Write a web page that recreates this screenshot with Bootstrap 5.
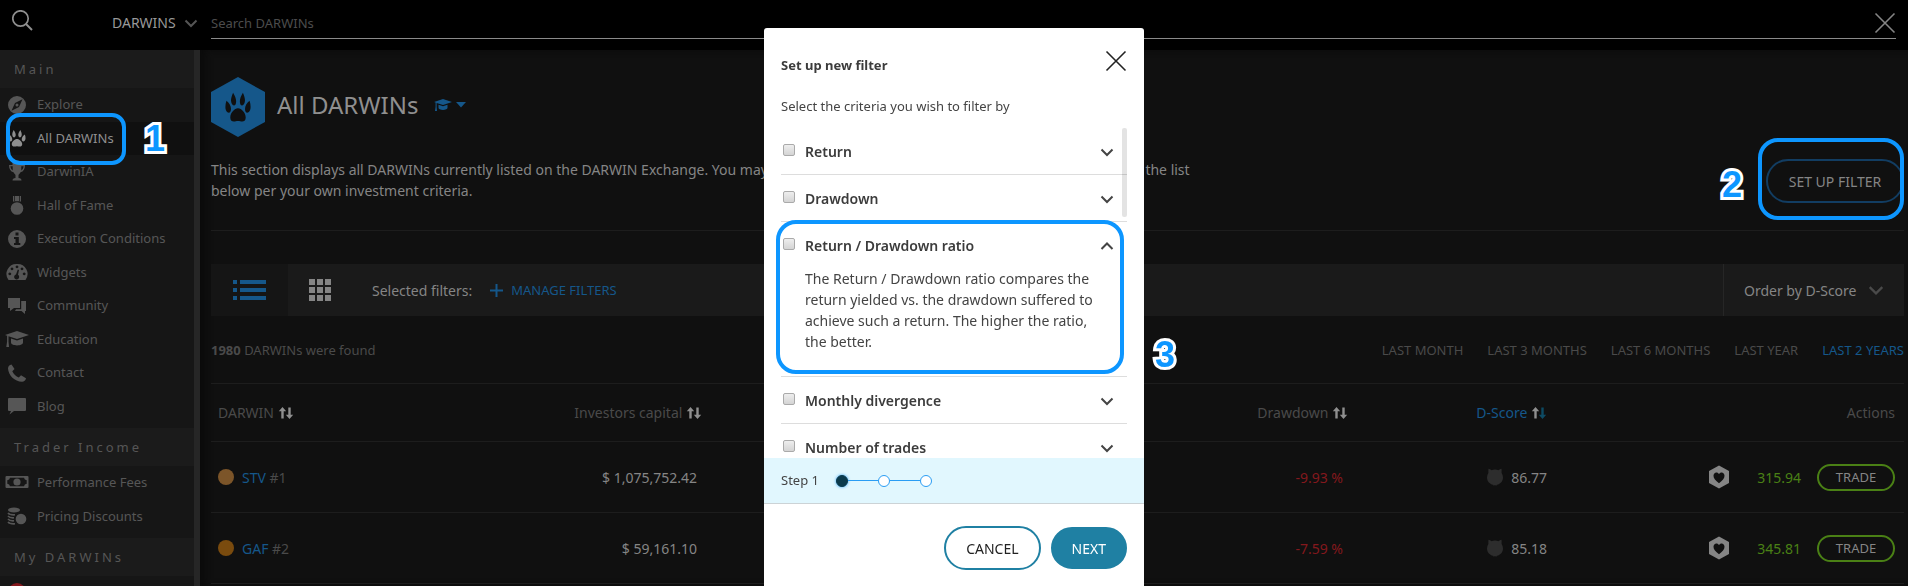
<!DOCTYPE html>
<html lang="en">
<head>
<meta charset="utf-8">
<meta name="viewport" content="width=device-width, initial-scale=1">
<title>All DARWINs</title>
<link href="https://cdn.jsdelivr.net/npm/bootstrap@5.3.0/dist/css/bootstrap.min.css" rel="stylesheet">
<style>
:root { --accent: #15578a; --marker: #0d96ff; --rule: #1d1d1d; --soft: #4a4a4a; --bright: #858585; }
body { font: 14px/21px "Noto Sans", "Open Sans", sans-serif; background: #101010; color: var(--bright); height: 100vh; overflow: hidden; }
a { text-decoration: none; }
svg { display: block; fill: currentColor; flex: none; }
.fs-13 { font-size: 13px; }

/* top search bar */
.topbar { background: #000; height: 50px; padding: 0 12px; flex: none; }
.topbar-scope { width: 199px; padding-right: 13px; }
.topbar-scope select { appearance: none; background: none; border: 0; color: #999; padding: 0; width: 64px; }
.topbar-field { border-bottom: 1px solid #8a8a8a; height: 39px; }
.topbar-field input { background: none; border: 0; outline: 0; padding: 8px 0 0; }
.topbar-field input::placeholder { color: #4c4c4c; opacity: 1; }
.plain-btn { background: none; border: 0; padding: 0; color: inherit; }

/* side navigation */
.sidebar { width: 200px; background: #161616; border-right: 6px solid #262626; overflow: hidden; flex: none; font-size: 13px; color: #565656; }
.sidebar h2 { font-size: 13px; line-height: 20px; font-weight: 400; letter-spacing: 3px; background: #1b1b1b; padding: 9px 14px; margin: 0; }
.sidebar ul { padding-bottom: 5px; }
.sidebar li { position: relative; }
.sidebar li a { display: flex; align-items: center; gap: 8px; padding: 7px 5px; line-height: 1.5; color: inherit; }
.sidebar li a svg { margin: -4px 0; }
.sidebar li.current a { background: #101010; color: #8f8f8f; }

/* numbered markers */
.marker-box { position: absolute; border: 4px solid var(--marker); border-radius: 20px; pointer-events: none; z-index: 2; }
.marker-num { position: absolute; font: 700 36px/36px "Liberation Sans", Arial, sans-serif; color: var(--marker); -webkit-text-stroke: 6px #fff; paint-order: stroke fill; z-index: 2; }
.mark-nav { left: 6px; top: -9px; width: 120px; height: 52px; border-radius: 14px; }
.num-nav { left: 145px; top: -1px; }
.mark-btn { inset: -21px 0 -17px -8px; }
.num-btn { left: -44px; top: 8px; }
.mark-item { left: 12px; right: 20px; top: -2px; bottom: 3px; }
.num-item { left: 100%; top: 309px; margin-left: 11px; }

/* main content */
main { padding: 27px 4px 0 11px; box-shadow: inset 6px 0 6px #0b0b0b; }
h1 { font-size: 24px; line-height: 34px; color: #8f8f8f; font-weight: 400; }
.intro { width: 984px; margin: 22px 0 0; }
.filter-btn { border: 2px solid #123d62; border-radius: 22px; background: none; color: var(--bright); height: 44px; width: 138px; padding: 0; }
.filter-cell { margin-top: 22px; }
.page-head { border-bottom: 1px solid var(--rule); padding-bottom: 27px; }
.toolbar { background: #1a1a1a; height: 52px; margin-top: 33px; }
.toolbar .view-list { background: #151515; width: 77px; color: var(--accent); }
.toolbar .view-grid { width: 64px; }
.toolbar-filters { margin-left: 20px; gap: 18px; }
.order-by { border-left: 1px solid #262626; padding: 0 20px; width: 181px; }
.accent, .darwins th.accent { color: var(--accent); }
.soft { color: var(--soft); }
.found { padding: 24px 0 22px; }

.darwins { width: 100%; table-layout: fixed; border-top: 1px solid var(--rule); }
.darwins th { font-weight: 400; color: var(--soft); height: 58px; }
.darwins td { height: 71px; }
.darwins th, .darwins td { padding: 0 9px 0 7px; border-bottom: 1px solid var(--rule); vertical-align: middle; white-space: nowrap; }
.darwins .num { text-align: right; }
.darwins td.num { padding-right: 14px; }
.darwins td.flush { padding-right: 9px; }
.darwins th svg { display: inline-block; color: #8f8f8f; vertical-align: -2px; }
.coin { width: 16px; height: 16px; border-radius: 50%; background: #7c5529; }
.coin-gold { background: #7a4b0e; }
.loss { color: #84181d; }
.gain { color: #4a8015; }
.trade { border: 2px solid #4a8015; border-radius: 14px; height: 27px; width: 78px; line-height: 21px; font-size: 13px; color: var(--bright); background: none; padding: 0; }

/* filter dialog */
.modal { overflow: hidden; color: #444; }
.modal-dialog { max-width: 380px; margin: 28px auto 0; }
.modal-content { border: 0; border-radius: 3px; }
.modal-head { padding: 22px 17px 0; }
.modal-head h2 { font-size: 13px; line-height: 21px; margin: 5px 0 0; font-weight: 700; color: #3c3c3c; }
.criteria { height: 330px; overflow: hidden; position: relative; }
.criteria-thumb { position: absolute; right: 17px; top: 0; width: 5px; height: 89px; border-radius: 2px; background: rgba(0,0,0,.11); }
.criterion { position: relative; padding: 13px 0 12px; margin: 0 17px; border-bottom: 1px solid #ddd; }
.criterion-wrap { position: relative; }
.criterion .title-line { font-weight: 600; color: #3c3c3c; line-height: 21px; }
.criterion input { appearance: none; width: 12px; height: 12px; margin: 0 10px 3px 2px; border: 1px solid #aaa; border-radius: 2px; background: linear-gradient(#eee, #d4d4d4); }
.criterion svg { margin-right: 13px; }
.criterion p { margin: 12px 0 12px 24px; width: 304px; }
.steps { background: #e1f7fe; border-bottom: 1px solid #ccd3d6; height: 46px; padding: 0 17px; }
.step-label { margin-right: 17px; }
.step-dot { width: 12px; height: 12px; border: 1px solid #2a9df4; border-radius: 50%; background: #fff; }
.step-dot.done { background: #0b3a4c; border-color: #0b3a4c; box-shadow: 0 0 3px #2a9df4; }
.step-link { width: 30px; height: 1px; background: #2a9df4; }
.modal-actions { padding: 22px 17px 26px; gap: 10px; }
.pill { border: 2px solid #1f80a3; border-radius: 22px; height: 44px; padding: 0 20px; background: #fff; color: #222; }
.pill-solid { background: #1f80a3; color: #fff; height: 42px; padding: 0 19px; }
</style>
</head>
<body class="d-flex flex-column">
<svg width="0" height="0" class="position-absolute" aria-hidden="true">
  <symbol id="paw" viewBox="0 0 24 24"><path d="M12 12.600c3 0 6.600 3.400 6.600 6.700 0 2.200-1.500 2.900-3 2.900-1.300 0-2.300-.4-3.600-.4s-2.300.4-3.600.4c-1.500 0-3-.7-3-2.900 0-3.300 3.600-6.700 6.600-6.700zM7.800 1.200c1.500 2 2.600 4.300 2.600 6.200 0 1.900-.7 3.200-1.900 3.200S6 9 6 6.800c0-1.700.8-3.700 1.800-5.600zM16.200 1.200c-1.500 2-2.600 4.300-2.600 6.200 0 1.900.7 3.200 1.900 3.200S18 9 18 6.800c0-1.700-.8-3.700-1.800-5.600zM2.100 7.100c2.400 1.500 3.900 3.700 3.900 6 0 1.700-.8 2.700-1.900 2.700C2.500 15.800 1.200 14 1.200 11.700c0-1.500.3-3.200.9-4.600zM21.900 7.100c-2.400 1.500-3.900 3.700-3.900 6 0 1.700.8 2.700 1.900 2.700 1.600 0 2.900-1.800 2.900-4.100 0-1.500-.3-3.200-.9-4.600z"/></symbol>
  <symbol id="cap" viewBox="0 0 24 18"><path d="M12 1 24 5 12 9 3.500 6.200v5.300L4 17H1.300l.8-5.500V5.700L0 5zM6 8.600 12 10.600l6-2v4c0 1.700-2.700 2.900-6 2.900s-6-1.200-6-2.900z"/></symbol>
  <symbol id="sort" viewBox="0 0 16 14"><path d="M4.500 1 8.200 5.200H5.700V12.500H3.300V5.200H.8zM11.500 13 15.200 8.800H12.700V1.500H10.300V8.800H7.800z"/></symbol>
  <symbol id="sort-desc" viewBox="0 0 16 14"><path d="M4.500 1 8.200 5.200H5.700V12.500H3.300V5.200H.8z"/><path fill="#0d4a63" d="M11.500 13 15.200 8.800H12.700V1.500H10.300V8.800H7.800z"/></symbol>
  <symbol id="down" viewBox="0 0 14 14"><path fill="none" stroke="currentColor" stroke-width="2" d="M1.500 4.500 7 10 12.500 4.500"/></symbol>
  <symbol id="up" viewBox="0 0 14 14"><path fill="none" stroke="currentColor" stroke-width="2" d="M1.500 10 7 4.500 12.500 10"/></symbol>
  <symbol id="cross" viewBox="0 0 22 22"><path fill="none" stroke="currentColor" stroke-width="1.600" d="M1.500 1.500 20.500 20.500M20.500 1.500 1.500 20.500"/></symbol>
  <symbol id="owl" viewBox="0 0 16 18"><path d="M1.500.8C3 1.200 3.800 1.700 4.500 2.200a9 9 0 0 1 7 0C12.200 1.700 13 1.200 14.500.8 14.800 2.500 14.500 4 14.600 5A9 9 0 0 1 16 9.500C16 13 13.500 16 10 16.800L9.200 17.800 8 17l-1.200.8L6 16.800C2.500 16 0 13 0 9.500A9 9 0 0 1 1.400 5C1.500 4 1.200 2.500 1.500.8z"/></symbol>
  <symbol id="fav" viewBox="0 0 20 24"><path fill-rule="evenodd" d="M10 .5 20 6v12L10 23.500 0 18V6zM10 18.200c3.500-2.500 5.500-4.800 5.500-7.400C15.500 8.700 14.200 7.400 12.600 7.400c-1.100 0-2 .6-2.600 1.600C9.400 8 8.500 7.400 7.400 7.400 5.800 7.400 4.500 8.700 4.500 10.800c0 2.600 2 4.900 5.500 7.400z"/></symbol>
</svg>

<header class="topbar d-flex align-items-start">
  <div class="topbar-scope d-flex align-items-center justify-content-between">
    <svg width="22" height="22" viewBox="0 0 22 22" class="mt-2" style="color:#8f8f8f"><circle cx="8.500" cy="8.500" r="7.700" fill="none" stroke="currentColor" stroke-width="1.700"/><path d="M14 14 20 20" stroke="currentColor" stroke-width="2"/></svg>
    <div class="d-flex align-items-center mt-2 pt-1 gap-2">
      <select aria-label="Search scope"><option>DARWINS</option></select>
      <svg width="14" height="14" style="color:#555"><use href="#down"/></svg>
    </div>
  </div>
  <div class="topbar-field flex-grow-1 d-flex align-items-center">
    <input class="fs-13 flex-grow-1" type="search" aria-label="Search" placeholder="Search DARWINs">
    <button class="plain-btn" aria-label="Close search"><svg class="mt-2" width="22" height="22"><use href="#cross"/></svg></button>
  </div>
</header>

<div class="d-flex flex-grow-1 overflow-hidden">
  <nav class="sidebar">
    <h2>Main</h2>
    <ul class="list-unstyled mb-0">
      <li><a href="#"><svg width="24" height="18" viewBox="0 0 24 18"><path fill-rule="evenodd" d="M12 0a9 9 0 1 1 0 18 9 9 0 0 1 0-18zM17.500 3.200 10 7 6.500 14.800 14 11zM12 7.500a1.500 1.500 0 1 1 0 3 1.500 1.500 0 0 1 0-3z"/></svg>Explore</a></li>
      <li class="current"><a href="#"><svg width="24" height="19"><use href="#paw"/></svg>All DARWINs</a><span class="marker-box mark-nav"></span><span class="marker-num num-nav">1</span></li>
      <li><a href="#"><svg width="24" height="18" viewBox="0 0 24 18"><path d="M7.500 0h9v2H20c0 4-1.500 6.500-4.500 7.300-.8 1.500-1.700 2-2 2.700v3c2 .3 3 1 3 2.500h-9c0-1.500 1-2.200 3-2.500v-3c-.3-.7-1.200-1.200-2-2.700C5.500 8.500 4 6 4 2h3.500zM5.400 3.300c.3 2 1 3.400 2.300 4.200V3.300zm10.900 0v4.200c1.300-.8 2-2.200 2.300-4.200z"/></svg>DarwinIA</a></li>
      <li><a href="#"><svg width="24" height="19" viewBox="0 0 24 19"><circle cx="12" cy="12.500" r="6.300"/><path d="M8 0h1.300v6L8 5.300zM10 0h4v5.200h-4zM14.700 0H16v5.300L14.700 6z"/></svg>Hall of Fame</a></li>
      <li><a href="#"><svg width="24" height="18" viewBox="0 0 24 18"><path fill-rule="evenodd" d="M12 0a9 9 0 1 1 0 18 9 9 0 0 1 0-18zM10.500 2.500v3h3v-3zM9 7v2h1.500v4H9v2h6.300v-2h-1.500V7z"/></svg>Execution Conditions</a></li>
      <li><a href="#"><svg width="24" height="18" viewBox="0 0 24 18"><path fill-rule="evenodd" d="M12 1a10 10 0 0 1 8.500 16h-17A10 10 0 0 1 12 1zM12 2.500a1.400 1.400 0 1 0 .01 0zM7 4.500a1.400 1.400 0 1 0 .01 0zM17 4.500a1.400 1.400 0 1 0 .01 0zM4.800 9.500a1.400 1.400 0 1 0 .01 0zM19.200 9.500a1.400 1.400 0 1 0 .01 0zM12.800 6.500 11 11.500a2.500 2.500 0 1 0 2 .3L14 7z"/></svg>Widgets</a></li>
      <li><a href="#"><svg width="24" height="18" viewBox="0 0 24 18"><path d="M3 1h12v10H9l-4 3v-3H3zM16.200 4H21v10h-1v3l-3.500-3H10l1-1.800h5.200z"/></svg>Community</a></li>
      <li><a href="#"><svg width="24" height="18"><use href="#cap"/></svg>Education</a></li>
      <li><a href="#"><svg width="24" height="18" viewBox="0 0 24 18"><path d="M6.500.5 9.500 5 7.300 7.200C8.500 10 11 12.400 13.800 13.500L16 11.200l5 3c-.3 2-2 3.500-4 3.600C9.500 17.500 3.500 11.500 3 4.500 3 2.500 4.500.8 6.500.5z"/></svg>Contact</a></li>
      <li><a href="#"><svg width="24" height="18" viewBox="0 0 24 18"><path d="M4 1h16a1 1 0 0 1 1 1v11a1 1 0 0 1-1 1H9l-4.500 3.500L6 14H4a1 1 0 0 1-1-1V2a1 1 0 0 1 1-1z"/></svg>Blog</a></li>
    </ul>
    <h2>Trader Income</h2>
    <ul class="list-unstyled mb-0">
      <li><a href="#"><svg width="24" height="18" viewBox="0 0 24 18"><path fill-rule="evenodd" d="M1.500 2h21a1 1 0 0 1 1 1v10a1 1 0 0 1-1 1h-21a1 1 0 0 1-1-1V3a1 1 0 0 1 1-1zM5 3.800A3 3 0 0 1 2.300 6.300v3.400A3 3 0 0 1 5 12.200h14a3 3 0 0 1 2.700-2.500V6.300A3 3 0 0 1 19 3.800zM12 4.400a3.600 3.600 0 1 1 0 7.200 3.600 3.600 0 0 1 0-7.200z"/></svg>Performance Fees</a></li>
      <li><a href="#"><svg width="24" height="18" viewBox="0 0 24 18"><ellipse cx="9" cy="3" rx="6" ry="2.500"/><circle cx="16" cy="12" r="5.300"/><path fill="none" stroke="currentColor" stroke-width="1.600" d="M3 6c1 1.300 3 2 7 1.800M3 9c1 1.300 3 2 6 1.800M3 12c1 1.300 3 2 6 1.800M3 15c1 1.300 3 2 7 1.800"/></svg>Pricing Discounts</a></li>
    </ul>
    <h2>My DARWINs</h2>
    <ul class="list-unstyled mb-0">
      <li><a href="#" aria-label="My DARWINs"><svg width="24" height="18" viewBox="0 0 24 18" class="loss m-0"><circle cx="12" cy="9" r="9"/></svg></a></li>
    </ul>
  </nav>

  <main class="flex-grow-1">
    <div class="page-head">
      <div class="d-flex align-items-center">
        <svg width="54" height="60" viewBox="0 0 54 60" class="accent"><path d="M27 0 54 15V45L27 60 0 45V15z"/><svg x="13" y="14" width="28" height="33" viewBox="0 0 24 24" preserveAspectRatio="none" color="#101010"><use href="#paw"/></svg></svg>
        <h1 class="mb-1" style="margin-left:12px">All DARWINs</h1>
        <a class="accent d-flex align-items-center gap-1 ms-3 mb-1" href="#" aria-label="Learn more"><svg width="18" height="14"><use href="#cap"/></svg><svg width="10" height="6" viewBox="0 0 10 6"><path d="M0 0h10L5 5.500z"/></svg></a>
      </div>
      <div class="d-flex justify-content-between align-items-start">
        <p class="intro">This section displays all DARWINs currently listed on the DARWIN Exchange. You may sort them by any of the columns or set up one filter over the list below per your own investment criteria.</p>
        <div class="position-relative filter-cell">
          <button class="filter-btn d-block">SET UP FILTER</button>
          <span class="marker-box mark-btn"></span><span class="marker-num num-btn">2</span>
        </div>
      </div>
    </div>

    <div class="toolbar d-flex align-items-stretch">
      <button class="plain-btn view-list d-flex align-items-center justify-content-center" aria-label="List view"><svg width="33" height="20" viewBox="0 0 33 20"><path d="M0 0h4v4H0zM7 0h26v4H7zM0 8h4v4H0zM7 8h26v4H7zM0 16h4v4H0zM7 16h26v4H7z"/></svg></button>
      <button class="plain-btn view-grid d-flex align-items-center justify-content-center" aria-label="Grid view"><svg width="22" height="22" viewBox="0 0 22 22"><path d="M0 0h6v6H0zM8 0h6v6H8zM16 0h6v6h-6zM0 8h6v6H0zM8 8h6v6H8zM16 8h6v6h-6zM0 16h6v6H0zM8 16h6v6H8zM16 16h6v6h-6z"/></svg></button>
      <div class="toolbar-filters d-flex align-items-center me-auto">
        <span>Selected filters:</span>
        <a href="#" class="accent d-flex align-items-center gap-2 fs-13"><svg width="13" height="13" viewBox="0 0 13 13"><path d="M5.500 0h2v5.500H13v2H7.500V13h-2V7.500H0v-2h5.500z"/></svg>MANAGE FILTERS</a>
      </div>
      <button class="plain-btn order-by d-flex align-items-center justify-content-between">Order by D-Score <svg width="16" height="16" class="soft"><use href="#down"/></svg></button>
    </div>

    <div class="found soft fs-13 d-flex justify-content-between">
      <span><strong>1980</strong> DARWINs were found</span>
      <nav class="d-flex gap-4" aria-label="Period">
        <a class="soft" href="#">LAST MONTH</a><a class="soft" href="#">LAST 3 MONTHS</a><a class="soft" href="#">LAST 6 MONTHS</a><a class="soft" href="#">LAST YEAR</a><a class="accent" href="#">LAST 2 YEARS</a>
      </nav>
    </div>

    <table class="darwins">
      <colgroup><col style="width:200px"><col style="width:300px"><col><col style="width:157px"><col style="width:199px"><col style="width:348px"></colgroup>
      <thead>
        <tr><th>DARWIN <svg width="16" height="14"><use href="#sort"/></svg></th><th class="num">Investors capital <svg width="16" height="14"><use href="#sort"/></svg></th><th></th><th class="num">Drawdown <svg width="16" height="14"><use href="#sort"/></svg></th><th class="num accent">D-Score <svg width="16" height="14"><use href="#sort-desc"/></svg></th><th class="num">Actions</th></tr>
      </thead>
      <tbody>
        <tr>
          <td><div class="d-flex align-items-center gap-2"><span class="coin"></span><span><a class="accent" href="#">STV</a> <span class="soft">#1</span></span></div></td>
          <td class="num">$ 1,075,752.42</td><td></td><td class="num loss">-9.93 %</td>
          <td class="flush"><div class="d-flex align-items-center justify-content-end gap-2"><svg width="16" height="18" style="color:#2d2d2d"><use href="#owl"/></svg>86.77</div></td>
          <td class="flush"><div class="d-flex align-items-center justify-content-end"><svg width="20" height="24"><use href="#fav"/></svg><span class="gain ms-4 ps-1 me-3">315.94</span><button class="trade">TRADE</button></div></td>
        </tr>
        <tr>
          <td><div class="d-flex align-items-center gap-2"><span class="coin coin-gold"></span><span><a class="accent" href="#">GAF</a> <span class="soft">#2</span></span></div></td>
          <td class="num">$ 59,161.10</td><td></td><td class="num loss">-7.59 %</td>
          <td class="flush"><div class="d-flex align-items-center justify-content-end gap-2"><svg width="16" height="18" style="color:#2d2d2d"><use href="#owl"/></svg>85.18</div></td>
          <td class="flush"><div class="d-flex align-items-center justify-content-end"><svg width="20" height="24"><use href="#fav"/></svg><span class="gain ms-4 ps-1 me-3">345.81</span><button class="trade">TRADE</button></div></td>
        </tr>
      </tbody>
    </table>
  </main>
</div>

<div class="modal d-block" role="dialog" aria-labelledby="dlg-title">
  <div class="modal-dialog">
    <div class="modal-content">
      <div class="modal-head d-flex justify-content-between align-items-start">
        <h2 id="dlg-title">Set up new filter</h2>
        <button class="plain-btn" aria-label="Close" style="color:#222"><svg width="22" height="22"><use href="#cross"/></svg></button>
      </div>
      <p class="fs-13 mb-0" style="padding:20px 17px 11px">Select the criteria you wish to filter by</p>
      <div class="criteria">
        <div class="criterion d-flex align-items-center justify-content-between"><label class="title-line d-flex align-items-center"><input type="checkbox">Return</label><svg width="14" height="14"><use href="#down"/></svg></div>
        <div class="criterion d-flex align-items-center justify-content-between"><label class="title-line d-flex align-items-center"><input type="checkbox">Drawdown</label><svg width="14" height="14"><use href="#down"/></svg></div>
        <div class="criterion-wrap">
          <div class="criterion">
            <div class="d-flex align-items-center justify-content-between"><label class="title-line d-flex align-items-center"><input type="checkbox">Return / Drawdown ratio</label><svg width="14" height="14"><use href="#up"/></svg></div>
            <p>The Return / Drawdown ratio compares the return yielded vs. the drawdown suffered to achieve such a return. The higher the ratio, the better.</p>
          </div>
          <span class="marker-box mark-item"></span>
        </div>
        <div class="criterion d-flex align-items-center justify-content-between"><label class="title-line d-flex align-items-center"><input type="checkbox">Monthly divergence</label><svg width="14" height="14"><use href="#down"/></svg></div>
        <div class="criterion d-flex align-items-center justify-content-between"><label class="title-line d-flex align-items-center"><input type="checkbox">Number of trades</label><svg width="14" height="14"><use href="#down"/></svg></div>
        <span class="criteria-thumb"></span>
      </div>
      <div class="steps d-flex align-items-center">
        <span class="step-label fs-13">Step 1</span>
        <span class="step-dot done"></span><span class="step-link"></span><span class="step-dot"></span><span class="step-link"></span><span class="step-dot"></span>
      </div>
      <div class="modal-actions d-flex justify-content-end align-items-center">
        <button class="pill">CANCEL</button><button class="pill pill-solid">NEXT</button>
      </div>
      <span class="marker-num num-item">3</span>
    </div>
  </div>
</div>
<script src="https://cdn.jsdelivr.net/npm/bootstrap@5.3.0/dist/js/bootstrap.bundle.min.js"></script>
</body>
</html>
